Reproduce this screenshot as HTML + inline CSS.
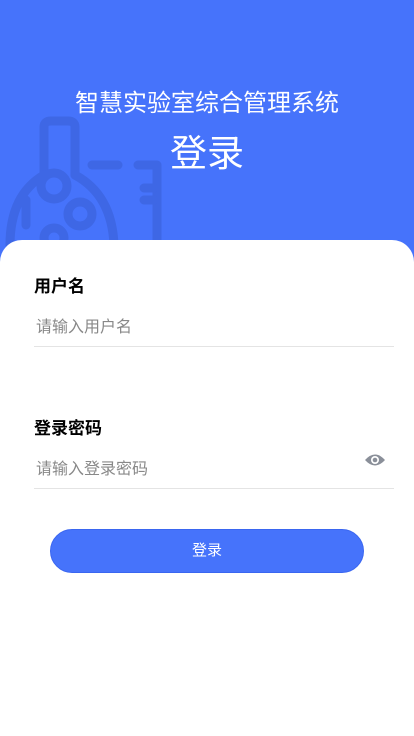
<!DOCTYPE html>
<html><head><meta charset="utf-8"><style>
*{margin:0;padding:0;box-sizing:border-box}
body{width:414px;height:736px;overflow:hidden;background:#fff;font-family:"Liberation Sans","Noto Sans CJK SC",sans-serif;position:relative}
.top{position:absolute;left:0;top:0;width:414px;height:270px;background:#4673fb}
.t1{position:absolute;top:83px;width:414px;text-align:center;color:#fff;font-size:24px}
.t2{position:absolute;top:123px;width:414px;text-align:center;color:#fff;font-size:37px}
.card{position:absolute;left:0;top:240px;width:414px;height:496px;background:#fff;border-radius:22px 22px 0 0}
.lab{position:absolute;left:34px;font-size:17px;font-weight:bold;color:#000}
.inp{position:absolute;left:34px;width:360px;height:42px;border-bottom:1px solid #e4e4e4;font-size:16px;color:#888;line-height:46px;padding-left:2px}
.btn{position:absolute;left:50px;top:529px;width:314px;height:44px;border-radius:22px;background:#4673fb;border:1px solid #3a66f0;color:#fff;font-size:15px;text-align:center;line-height:42px}
</style></head><body>
<div class="top">
<svg width="200" height="270" style="position:absolute;left:0;top:0" fill="none" stroke="#3e67e5" stroke-width="9" stroke-linecap="round" stroke-linejoin="round">
<path d="M44 175 V127 Q44 121 51 121 H68 Q75 121 75 127 V175"/>
<path d="M44 175 Q10 195 10 245"/>
<path d="M75 175 Q112 195 114 245"/>
<circle cx="54" cy="186" r="13"/>
<circle cx="80" cy="214" r="12"/>
<circle cx="54" cy="238" r="10"/>
<path d="M26 200 V225"/>
<path d="M92 165 H118"/>
<path d="M138 165 H157 V250"/>
<path d="M144 188 H154 M144 200 H154"/>
</svg>
<div class="t1">智慧实验室综合管理系统</div>
<div class="t2">登录</div>
</div>
<div class="card"></div>
<div class="lab" style="top:272px">用户名</div>
<div class="inp" style="top:305px">请输入用户名</div>
<div class="lab" style="top:414px">登录密码</div>
<div class="inp" style="top:447px">请输入登录密码</div>
<svg style="position:absolute;left:364px;top:452px" width="22" height="16" viewBox="0 0 22 16"><path d="M1 8 Q11 -3 21 8 Q11 19 1 8Z" fill="#8a8f99"/><circle cx="11" cy="8" r="4" fill="#fff"/><circle cx="11" cy="8" r="2.3" fill="#8a8f99"/></svg>
<div class="btn">登录</div>
</body></html>
